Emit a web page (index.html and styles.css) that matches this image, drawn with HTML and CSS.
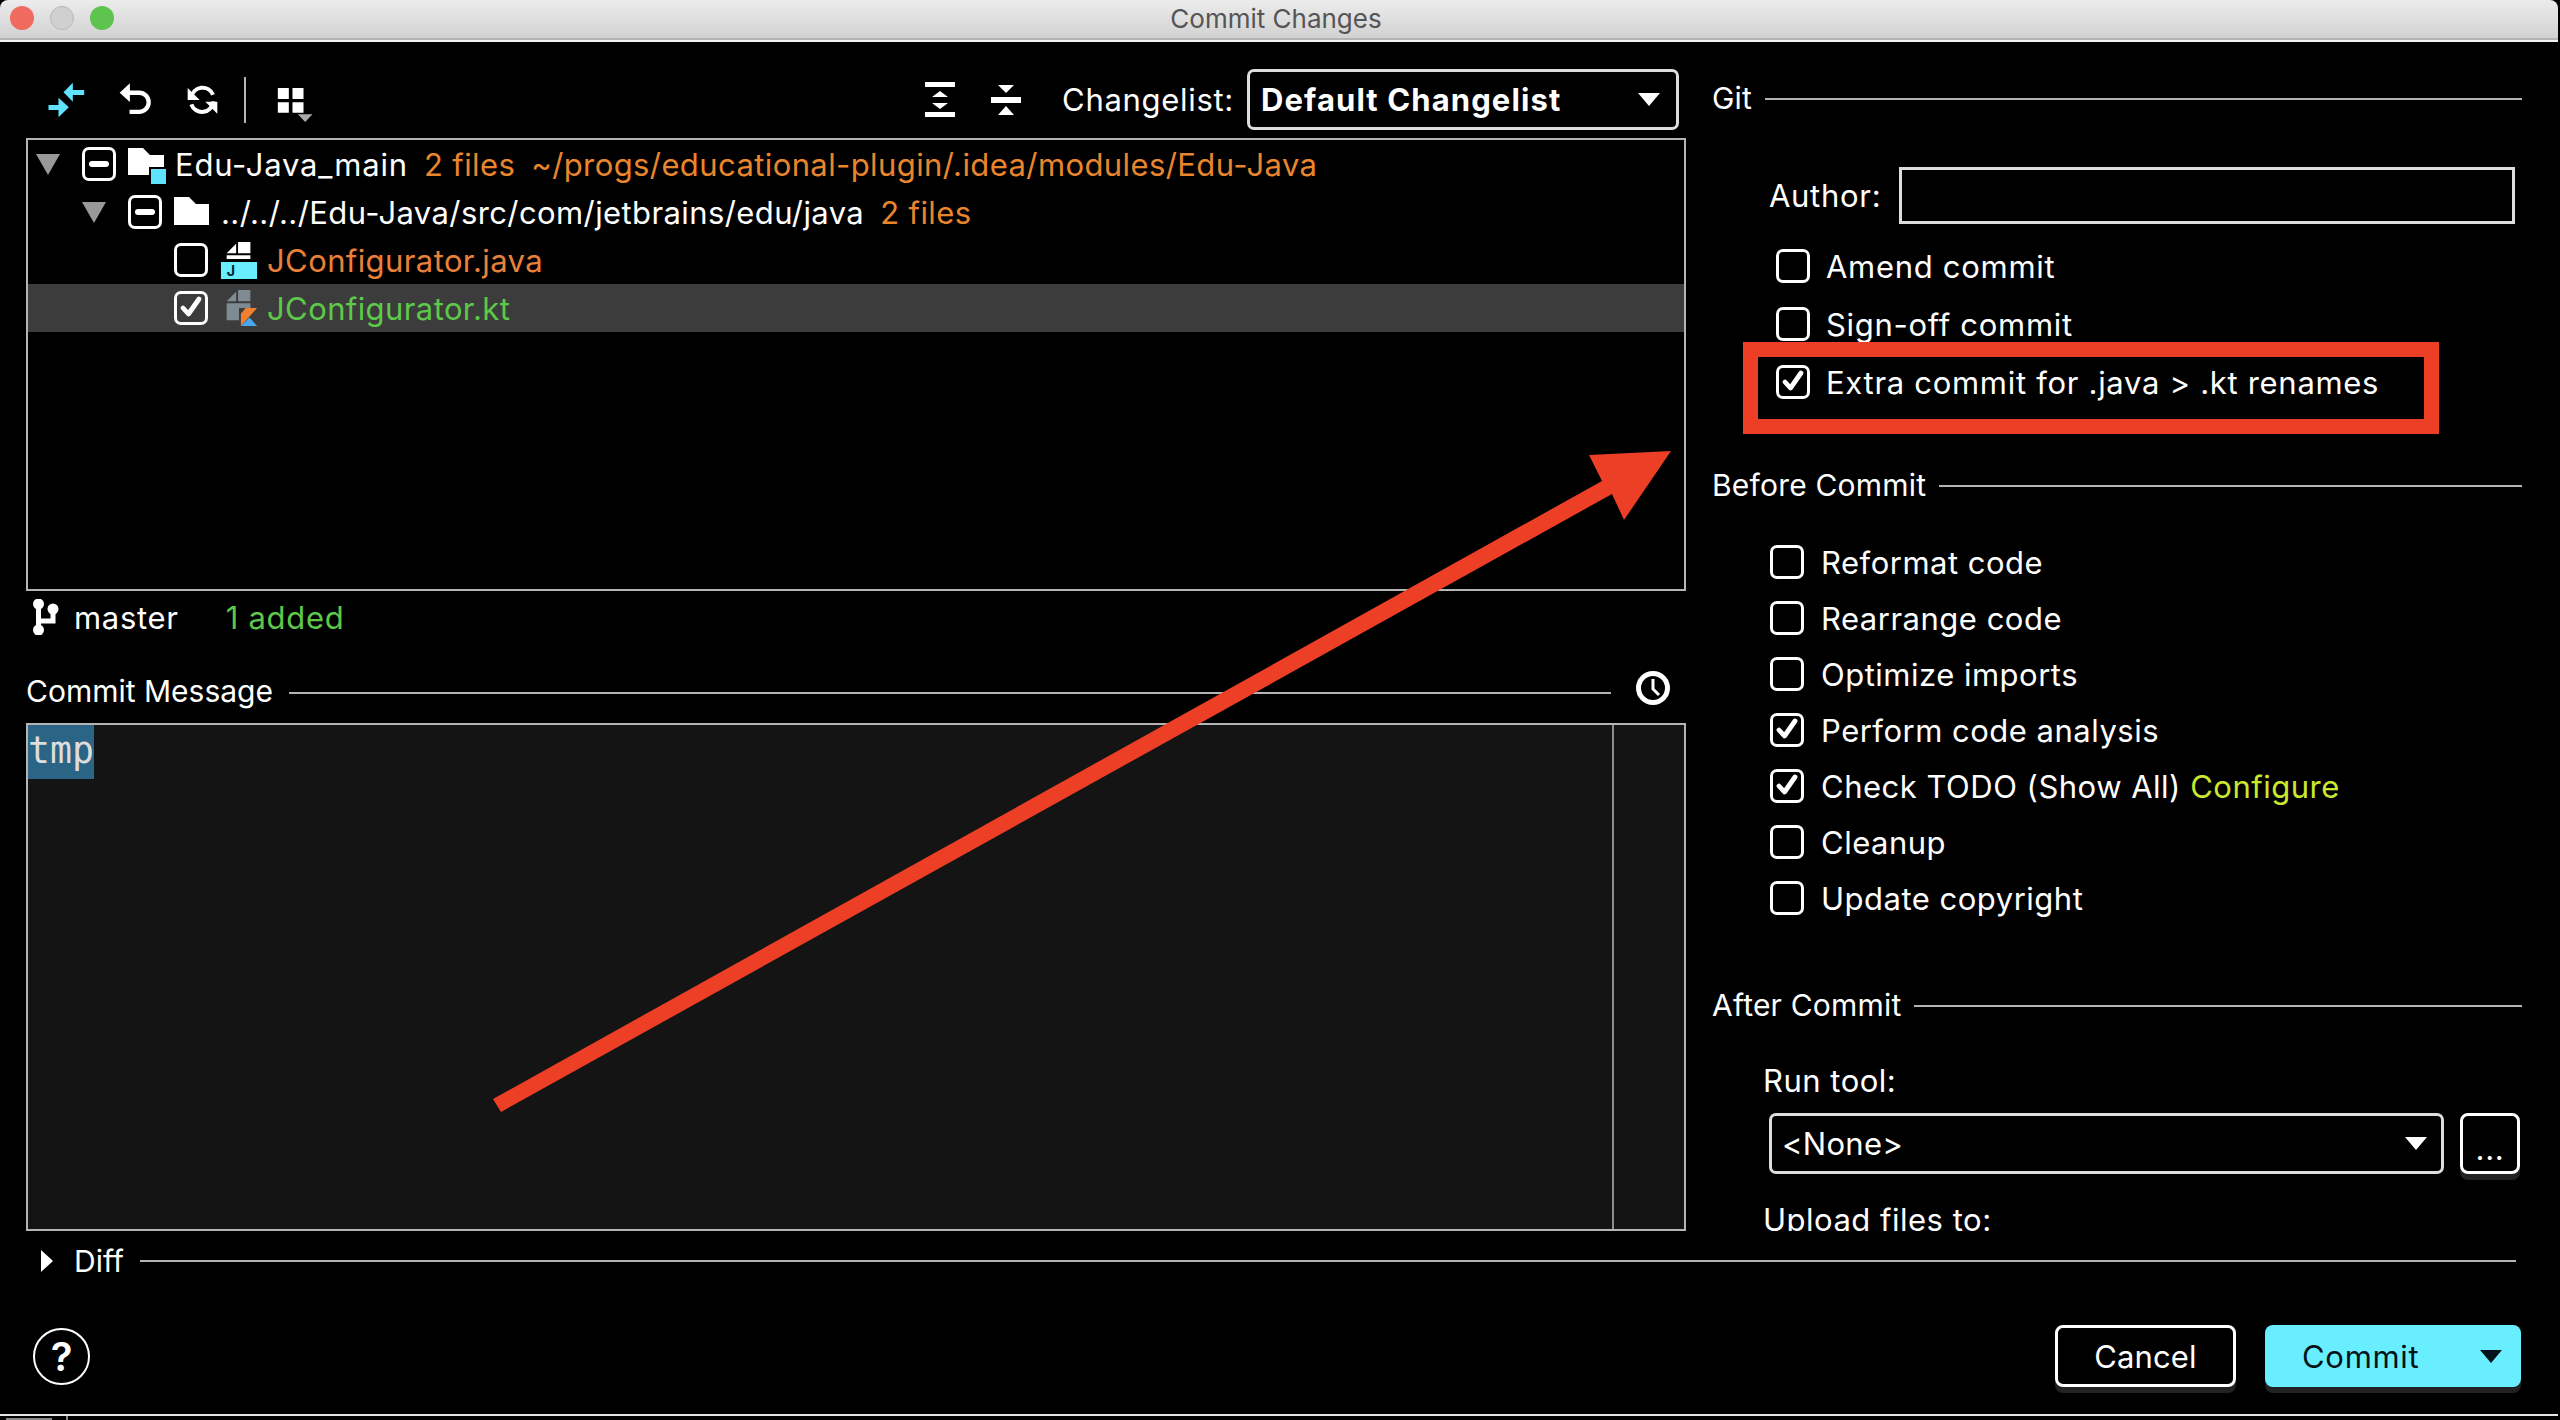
FILE: index.html
```html
<!DOCTYPE html>
<html lang="en">
<head>
    <meta charset="UTF-8">
    <title>Commit Changes</title>
    <link rel="stylesheet" href="styles.css">
</head>
<body>
    <svg class="sprite" width="0" height="0">
        <symbol id="tick" viewBox="0 0 28 28">
            <path d="M6 14l5.500 6L22 5" fill="none" stroke="#fff" stroke-width="4.800" stroke-linecap="round" stroke-linejoin="round"/>
        </symbol>
    </svg>

    <div class="window">
        <div class="titlebar">
            <div class="lights">
                <span class="light red"></span>
                <span class="light grey"></span>
                <span class="light green"></span>
            </div>
            <div class="title">Commit Changes</div>
        </div>

        <div class="panels">
            <div class="left">
                <div class="toolbar">
                    <svg class="tool merge" viewBox="84 60 110 120">
                        <path fill="#5fe3ff" d="M130 97l28-29v22h34v15h-34v20zM146 142l-31-29v22H85v15h30v22z"/>
                    </svg>
                    <svg class="tool undo" viewBox="296 60 100 120">
                        <path fill="#fff" d="M298 98l31-29v57z"/>
                        <path fill="none" stroke="#fff" stroke-width="13" d="M325 98h32a29 29 0 0 1 0 58h-29"/>
                    </svg>
                    <svg class="tool sync" viewBox="500 60 93 120">
                        <path fill="none" stroke="#fff" stroke-width="12" d="M513 112a34 34 0 0 1 65-8M579 124a34 34 0 0 1-66 9"/>
                        <path fill="#fff" d="M502 84v36h36zM591 161v-36h-36z"/>
                    </svg>
                    <span class="tool-sep"></span>
                    <svg class="tool grid" viewBox="770 60 107 120">
                        <path fill="#fff" d="M772 84h33v33h-33zM816 84h33v33h-33zM772 127h33v31h-33zM816 127h33v31h-33z"/>
                        <path fill="#aaa" d="M832 163h44l-22 23z"/>
                    </svg>

                    <div class="toolbar-right">
                        <svg class="tree-tool" viewBox="0 0 30 35">
                            <path fill="#fff" d="M0 0h30v5H0zM0 30h30v5H0zM15 9l8 6H7zM7 21h16l-8 6z"/>
                        </svg>
                        <svg class="tree-tool collapse" viewBox="0 0 30 35">
                            <path fill="#fff" d="M7 3h16l-8 8zM0 15h30v6H0zM15 24l8 9H7z"/>
                        </svg>
                        <span class="changelist-label">Changelist:</span>
                        <div class="combo changelist">
                            <span>Default Changelist</span>
                            <i class="arrow-down"></i>
                        </div>
                    </div>
                </div>

                <div class="tree">
                    <div class="row level-0">
                        <i class="caret"></i>
                        <span class="check partial"></span>
                        <svg class="node-icon" viewBox="0 0 38 38">
                            <path fill="#fff" d="M0 3h15l7 7h14v20H0z"/>
                            <path d="M21 22h17v17H21z"/>
                            <path fill="#5fe3ff" d="M23 24h15v15H23z"/>
                        </svg>
                        <span class="name module">Edu-Java_main</span>
                        <span class="info">2 files</span>
                        <span class="info">~/progs/educational-plugin/.idea/modules/Edu-Java</span>
                    </div>
                    <div class="row level-1">
                        <i class="caret"></i>
                        <span class="check partial"></span>
                        <svg class="node-icon" viewBox="0 0 38 38">
                            <path fill="#fff" d="M0 4h15l7 7h13v21H0z"/>
                        </svg>
                        <span class="name">../../../Edu-Java/src/com/jetbrains/edu/java</span>
                        <span class="info">2 files</span>
                    </div>
                    <div class="row level-2">
                        <span class="check"></span>
                        <svg class="node-icon" viewBox="0 0 38 40">
                            <path fill="#fff" d="M6 13L16 3v10zM18 1h13v12H18zM6 15h25v4H6z"/>
                            <path fill="#69eeff" d="M0 22h38v18H0z"/>
                            <text x="6" y="37" class="java-j">J</text>
                        </svg>
                        <span class="name java">JConfigurator.java</span>
                    </div>
                    <div class="row level-2 selected">
                        <span class="check"><svg class="tick"><use href="#tick"/></svg></span>
                        <svg class="node-icon" viewBox="0 0 38 40">
                            <path fill="#7f8b93" d="M6 13L16 3v10zM18 1h13v12H18zM6 15h25v5H19v13H6z"/>
                            <path fill="#f08030" d="M21 39l17-19H26l-5 6z"/>
                            <path fill="#4aa8f0" d="M21 39h17l-8-9z"/>
                        </svg>
                        <span class="name kotlin">JConfigurator.kt</span>
                    </div>
                </div>

                <div class="status">
                    <svg class="branch" viewBox="0 0 27 36">
                        <path fill="none" stroke="#fff" stroke-width="5" d="M6.500 5v26M6.500 22H21V10"/>
                        <circle cx="6.500" cy="5" r="5.500" fill="#fff"/>
                        <circle cx="6.500" cy="31" r="5.500" fill="#fff"/>
                        <circle cx="21" cy="10" r="5.500" fill="#fff"/>
                    </svg>
                    <span class="branch-name">master</span>
                    <span class="added">1 added</span>
                </div>

                <div class="message-head">
                    <span>Commit Message</span>
                    <span class="rule"></span>
                    <svg class="clock" viewBox="0 0 34 34">
                        <circle cx="17" cy="17" r="14.500" fill="none" stroke="#fff" stroke-width="5"/>
                        <path fill="none" stroke="#fff" stroke-width="3" d="M17 8v10l6 6"/>
                    </svg>
                </div>

                <div class="message">
                    <div class="message-text"><span class="selection">tmp</span></div>
                </div>
            </div>

            <div class="right">
                <div class="group-head git"><span>Git</span><span class="rule"></span></div>
                <div class="author">
                    <label>Author:</label>
                    <div class="text-field"></div>
                </div>
                <div class="options git-options">
                    <div class="option"><span class="check"></span>Amend commit</div>
                    <div class="option"><span class="check"></span>Sign-off commit</div>
                    <div class="option"><span class="check"><svg class="tick"><use href="#tick"/></svg></span>Extra commit for .java &gt; .kt renames</div>
                </div>

                <div class="group-head before"><span>Before Commit</span><span class="rule"></span></div>
                <div class="options before-options">
                    <div class="option"><span class="check"></span>Reformat code</div>
                    <div class="option"><span class="check"></span>Rearrange code</div>
                    <div class="option"><span class="check"></span>Optimize imports</div>
                    <div class="option"><span class="check"><svg class="tick"><use href="#tick"/></svg></span>Perform code analysis</div>
                    <div class="option"><span class="check"><svg class="tick"><use href="#tick"/></svg></span>Check TODO (Show All)&nbsp;<span class="link">Configure</span></div>
                    <div class="option"><span class="check"></span>Cleanup</div>
                    <div class="option"><span class="check"></span>Update copyright</div>
                </div>

                <div class="group-head after"><span>After Commit</span><span class="rule"></span></div>
                <div class="field-label run-label">Run tool:</div>
                <div class="tool-row">
                    <div class="combo run-combo">
                        <span>&lt;None&gt;</span>
                        <i class="arrow-down"></i>
                    </div>
                    <div class="more">...</div>
                </div>
                <div class="field-label upload-label">Upload files to:</div>
            </div>
        </div>

        <div class="diff">
            <i class="caret-right"></i>
            <span>Diff</span>
            <span class="rule"></span>
        </div>

        <div class="footer">
            <div class="help">?</div>
            <div class="buttons">
                <div class="btn cancel">Cancel</div>
                <div class="btn commit">
                    <span>Commit</span>
                    <i class="arrow-down"></i>
                </div>
            </div>
        </div>

        <!-- annotation drawn over the screenshot -->
        <div class="red-box"></div>
        <svg class="red-arrow" viewBox="0 0 2560 1420">
            <path fill="#ec3f26" d="M493 1099L1602 481 1589 455 1671 451 1624 520 1612 494 501 1112z"/>
        </svg>
    </div>

    <div class="desktop">
        <span class="dock-a"></span>
        <span class="dock-b"></span>
    </div>
</body>
</html>
```

FILE: styles.css
```css
* {
    box-sizing: border-box;
}
body {
    margin: 0;
    width: 2560px;
    height: 1420px;
    overflow: hidden;
    background-color: #000;
    color: #fff;
    font-family: Inter, "Noto Sans", sans-serif;
    font-size: 31px;
    letter-spacing: 0.7px;
}
.sprite {
    position: absolute;
}
.window {
    position: relative;
    width: 2558px;
    height: 1416px;
    border-bottom: 2px solid #e4e4e4;
    display: flex;
    flex-direction: column;
}

/* title bar */
.titlebar {
    position: relative;
    height: 42px;
    flex: none;
    display: flex;
    align-items: center;
    justify-content: center;
    padding: 0 6px 4px 0;
    background: linear-gradient(#ececec, #d0d0d0);
    border-bottom: 2px solid #f2f2f2;
    box-shadow: inset 0 -2px 0 #b4b4b4;
    border-radius: 8px 8px 0 0;
}
.lights {
    position: absolute;
    left: 10px;
    top: 6px;
    display: flex;
    gap: 16px;
}
.light {
    width: 24px;
    height: 24px;
    border-radius: 50%;
}
.red {
    background-color: #ef6a5f;
}
.grey {
    background-color: #d0d0d0;
    border: 1px solid #b8b8b8;
}
.green {
    background-color: #5fc350;
}
.title {
    color: #555;
    font-size: 26px;
    letter-spacing: 0;
}

/* main columns */
.panels {
    height: 1189px;
    flex: none;
    display: flex;
}
.left {
    width: 1660px;
    margin-left: 26px;
    flex: none;
}
.right {
    width: 810px;
    margin-left: 26px;
    flex: none;
    overflow: hidden;
}
.rule {
    flex: 1;
    height: 2px;
    background-color: #b4b4b4;
}

/* toolbar */
.toolbar {
    height: 96px;
    padding: 27px 7px 8px 22px;
    display: flex;
    align-items: center;
}
.tool {
    height: 40px;
    flex: none;
    overflow: visible;
}
.merge {
    width: 37px;
}
.undo {
    width: 33px;
    margin-left: 34px;
}
.sync {
    width: 31px;
    margin-left: 35px;
}
.tool-sep {
    width: 2px;
    height: 46px;
    margin-left: 26px;
    background-color: #b4b4b4;
}
.grid {
    width: 36px;
    margin-left: 31px;
}
.toolbar-right {
    margin-left: auto;
    display: flex;
    align-items: center;
}
.tree-tool {
    width: 30px;
    height: 35px;
}
.collapse {
    margin-left: 36px;
}
.changelist-label {
    margin-left: 41px;
    margin-right: 13px;
}
.combo {
    display: flex;
    align-items: center;
    justify-content: space-between;
    height: 61px;
    border: 3px solid #ddd;
    border-radius: 7px;
}
.changelist {
    width: 432px;
    padding: 0 16px 0 11px;
    font-weight: 700;
    letter-spacing: 1.100px;
}
.arrow-down {
    width: 0;
    height: 0;
    border-left: 11px solid transparent;
    border-right: 11px solid transparent;
    border-top: 13px solid #fff;
}

/* changes tree */
.tree {
    height: 453px;
    border: 2px solid #b4b4b4;
}
.row {
    height: 48px;
    display: flex;
    align-items: center;
    white-space: nowrap;
    letter-spacing: 0.400px;
}
.level-0 {
    padding-left: 8px;
}
.level-1 {
    padding-left: 54px;
}
.level-2 {
    padding-left: 146px;
}
.selected {
    background-color: #3c3c3c;
}
.caret {
    width: 0;
    height: 0;
    margin-right: 22px;
    border-left: 12px solid transparent;
    border-right: 12px solid transparent;
    border-top: 21px solid #999;
}
.check {
    width: 34px;
    height: 34px;
    flex: none;
    border: 3px solid #fff;
    border-radius: 7px;
    display: flex;
    align-items: center;
    justify-content: center;
}
.partial::after {
    content: "";
    width: 20px;
    height: 6px;
    border-radius: 3px;
    background-color: #fff;
}
.tick {
    width: 28px;
    height: 28px;
}
.node-icon {
    width: 38px;
    height: 38px;
    margin: 0 9px 0 12px;
    flex: none;
    overflow: visible;
}
.java-j {
    font-size: 15px;
    font-weight: 700;
    letter-spacing: 0;
    fill: #062a33;
}
.module {
    letter-spacing: 0.800px;
}
.info {
    margin-left: 16px;
    color: #e9862d;
}
.java {
    color: #e9803a;
}
.kotlin {
    color: #5ec84a;
}

/* branch line */
.status {
    height: 52px;
    display: flex;
    align-items: center;
    padding-left: 6px;
}
.branch {
    width: 27px;
    height: 36px;
}
.branch-name {
    margin-left: 15px;
}
.added {
    margin-left: 47px;
    color: #5ec84a;
}

/* commit message */
.message-head {
    height: 80px;
    padding: 16px 16px 0 0;
    display: flex;
    align-items: center;
    font-size: 30px;
    letter-spacing: 0;
}
.message-head .rule {
    margin: 4px 25px 0 16px;
}
.clock {
    width: 34px;
    height: 34px;
    margin-top: -6px;
}
.message {
    height: 508px;
    border: 2px solid #b4b4b4;
    background-color: #141414;
}
.message-text {
    width: 1586px;
    height: 100%;
    border-right: 2px solid #8c8c8c;
    font-family: "DejaVu Sans Mono", monospace;
    font-size: 36.500px;
    letter-spacing: 0;
    color: #ddd;
}
.selection {
    display: inline-block;
    height: 54px;
    line-height: 52px;
    background-color: #2b6585;
}

/* right side groups */
.group-head {
    height: 36px;
    display: flex;
    align-items: center;
    font-size: 30px;
    letter-spacing: 0.200px;
}
.group-head .rule {
    margin-left: 13px;
    margin-top: 2px;
}
.git {
    margin-top: 38px;
}
.before {
    margin-top: 68px;
}
.after {
    margin-top: 72px;
}
.author {
    height: 57px;
    margin-top: 51px;
    padding-left: 57px;
    display: flex;
    align-items: center;
}
.author label {
    width: 130px;
}
.text-field {
    width: 616px;
    height: 57px;
    border: 3px solid #ddd;
}
.options {
    display: flex;
    flex-direction: column;
}
.option {
    height: 34px;
    display: flex;
    align-items: center;
    white-space: pre;
}
.option .check {
    margin-right: 17px;
}
.git-options {
    margin-top: 25px;
    padding-left: 64px;
    gap: 24px;
}
.git-options .check {
    margin-right: 16px;
}
.before-options {
    margin-top: 42px;
    padding-left: 58px;
    gap: 22px;
    letter-spacing: 0.500px;
}
.link {
    color: #cbe82e;
}
.field-label {
    height: 36px;
    padding-left: 51px;
    display: flex;
    align-items: center;
    letter-spacing: 0.500px;
}
.run-label {
    margin-top: 39px;
}
.tool-row {
    margin-top: 15px;
    padding-left: 57px;
    display: flex;
    gap: 16px;
}
.run-combo {
    width: 675px;
    padding: 0 14px 0 10px;
    letter-spacing: 0.300px;
}
.more {
    width: 60px;
    height: 61px;
    padding-bottom: 4px;
    border: 3px solid #fff;
    border-radius: 8px;
    box-shadow: 0 6px 0 #222;
    display: flex;
    align-items: flex-end;
    justify-content: center;
}
.upload-label {
    margin-top: 27px;
}

/* diff row */
.diff {
    height: 60px;
    flex: none;
    padding: 0 42px 0 41px;
    display: flex;
    align-items: center;
    font-size: 30px;
    letter-spacing: 0;
}
.caret-right {
    width: 0;
    height: 0;
    margin-right: 21px;
    border-top: 11px solid transparent;
    border-bottom: 11px solid transparent;
    border-left: 12px solid #fff;
}
.diff .rule {
    margin-left: 16px;
}

/* footer */
.footer {
    flex: 1;
    padding: 34px 37px 27px 33px;
    display: flex;
    align-items: center;
    justify-content: space-between;
}
.help {
    width: 57px;
    height: 57px;
    border: 2px solid #fff;
    border-radius: 50%;
    font-size: 40px;
    font-weight: 600;
    letter-spacing: 0;
    display: flex;
    align-items: center;
    justify-content: center;
}
.buttons {
    display: flex;
    gap: 29px;
}
.btn {
    height: 62px;
    border-radius: 8px;
    box-shadow: 0 6px 0 #222;
    display: flex;
    align-items: center;
}
.cancel {
    width: 181px;
    justify-content: center;
    border: 3px solid #fff;
    letter-spacing: 0.100px;
}
.commit {
    width: 256px;
    padding: 0 19px 0 37px;
    justify-content: space-between;
    background-color: #69eeff;
    color: #02141a;
}
.commit .arrow-down {
    border-top-color: #02141a;
}

/* annotation */
.red-box {
    position: absolute;
    left: 1743px;
    top: 342px;
    width: 696px;
    height: 92px;
    border: 15px solid #ec3f26;
}
.red-arrow {
    position: absolute;
    left: 0;
    top: 0;
    width: 2560px;
    height: 1420px;
    pointer-events: none;
}

/* strip of desktop under the window */
.desktop {
    height: 4px;
    position: relative;
}
.dock-a {
    position: absolute;
    left: 6px;
    top: 2px;
    width: 46px;
    height: 2px;
    background-color: #888;
}
.dock-b {
    position: absolute;
    left: 66px;
    top: 0;
    width: 2px;
    height: 4px;
    background-color: #888;
}
```
